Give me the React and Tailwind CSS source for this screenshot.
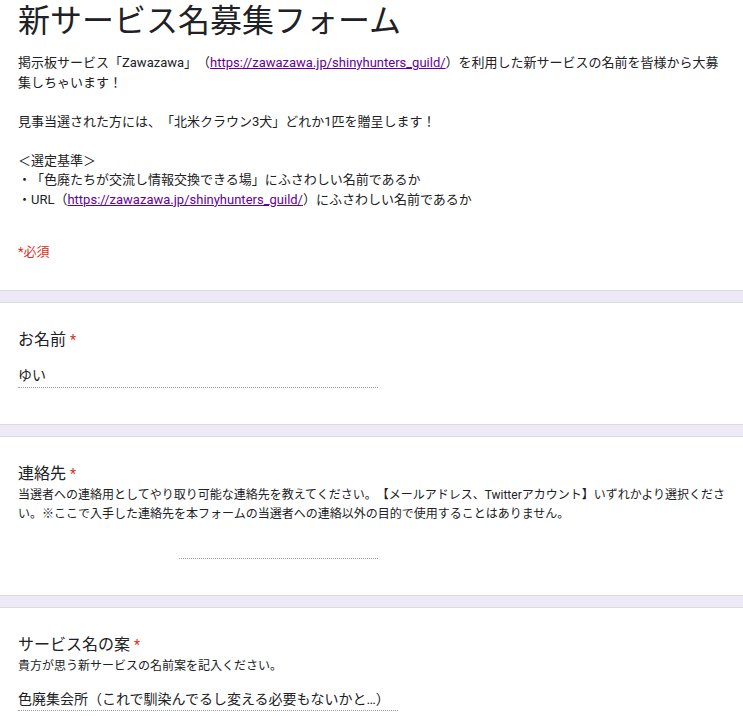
export default function App() {
  const font = { fontFamily: 'Roboto, "Noto Sans CJK JP", sans-serif' };
  const Band = () => <div className="h-[13px] bg-[#ede9f7] border-y border-[#dadce0]" />;
  const Star = () => <span className="text-[#d93025] text-[14px] ml-1">*</span>;
  return (
    <div className="w-[743px] h-[716px] overflow-hidden bg-white text-[#202124] [text-spacing-trim:space-all]" style={font}>
      <div className="px-[18px] pt-0 pb-[28px]">
        <h1 className="text-[32px] leading-[40px] text-[#202124] pt-[1px]">新サービス名募集フォーム</h1>
        <div className="text-[13px] leading-[19.5px] mt-[12px] text-[#202124]">
          <p>掲示板サービス「Zawazawa」（<span className="text-[#660099] underline">https://zawazawa.jp/shinyhunters_guild/</span>）を利用した新サービスの名前を皆様から大募集しちゃいます！</p>
          <p className="h-[19.5px]"></p>
          <p>見事当選された方には、「北米クラウン3犬」どれか1匹を贈呈します！</p>
          <p className="h-[19.5px]"></p>
          <p>＜選定基準＞</p>
          <p>・「色廃たちが交流し情報交換できる場」にふさわしい名前であるか</p>
          <p>・URL（<span className="text-[#660099] underline">https://zawazawa.jp/shinyhunters_guild/</span>）にふさわしい名前であるか</p>
        </div>
        <div className="text-[13px] text-[#d93025] mt-[33px]">*必須</div>
      </div>
      <Band />
      <div className="px-[18px] pt-[25px] pb-[36px]">
        <div className="text-[16px] leading-[24px]">お名前<Star /></div>
        <div className="mt-[12px] w-[360px] border-b border-dotted border-[#9aa0a6] text-[14px] leading-[22px] pb-[1px]">ゆい</div>
      </div>
      <Band />
      <div className="px-[18px] pt-[25px] pb-[36px]">
        <div className="text-[16px] leading-[24px]">連絡先<Star /></div>
        <div className="text-[12px] leading-[19px] mt-[0px]">当選者への連絡用としてやり取り可能な連絡先を教えてください。【メールアドレス、Twitterアカウント】いずれかより選択ください。※ここで入手した連絡先を本フォームの当選者への連絡以外の目的で使用することはありません。</div>
        <div className="ml-[161px] mt-[34px] w-[199px] border-b border-dotted border-[#9aa0a6]" />
      </div>
      <Band />
      <div className="px-[18px] pt-[25px]">
        <div className="text-[16px] leading-[24px]">サービス名の案<Star /></div>
        <div className="text-[12px] leading-[19px]">貴方が思う新サービスの名前案を記入ください。</div>
        <div className="mt-[12px] w-[380px] border-b border-dotted border-[#9aa0a6] text-[14px] leading-[22px] whitespace-nowrap">色廃集会所（これで馴染んでるし変える必要もないかと…）</div>
      </div>
    </div>
  );
}
